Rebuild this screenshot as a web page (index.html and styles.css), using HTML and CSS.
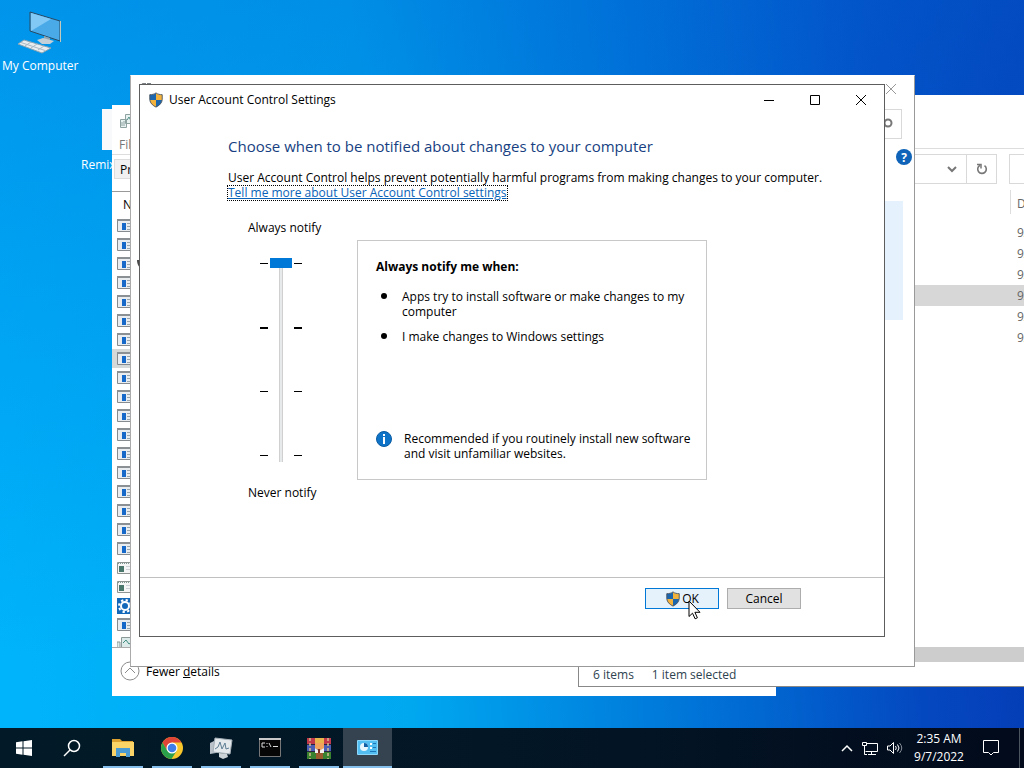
FILE: index.html
```html
<!DOCTYPE html>
<html lang="en">
<head>
  <meta charset="UTF-8">
  <meta name="viewport" content="width=device-width, initial-scale=1.0">
  <title>User Account Control Settings</title>
  <link rel="stylesheet" href="styles.css">
</head>
<body>
  <!-- Shared icons -->
  <svg class="sprite" aria-hidden="true">
    <symbol id="shield" viewBox="0 0 16 18">
      <path d="M8 1C6 2.600 3.500 3 1 3v5c0 4 3 7 7 9z" fill="#1c66ad"/>
      <path d="M8 1c2 1.600 4.500 2 7 2v5c0 4-3 7-7 9z" fill="#f3b23c"/>
      <path d="M1.200 9H8v8C4.500 15.500 1.600 13 1.200 9z" fill="#f3b23c"/>
      <path d="M8 9h6.800C14.400 13 11.500 15.500 8 17z" fill="#1c66ad"/>
      <path d="M8 1C6 2.600 3.500 3 1 3v5c0 4 3 7 7 9 4-2 7-5 7-9V3c-2.500 0-5-.4-7-2z" fill="none" stroke="#47515c"/>
    </symbol>
    <symbol id="app" viewBox="0 0 18 14">
      <path d="M.5 1.500h17v11H.5z" fill="#e9edef" stroke="#858b8f"/>
      <path d="M0 1h18" stroke="#8a9094" stroke-width="2"/>
      <path d="M5 4h4v7H5z" fill="#1669c9"/>
      <path d="M10 4.500h6M10 7.500h6M10 10.500h6" stroke="#9aa6ae"/>
    </symbol>
    <symbol id="bin" viewBox="0 0 18 14">
      <path d="M.5 1.500h17v11H.5z" fill="#f4f5f4" stroke="#8e9492"/>
      <path d="M1 2.500h16" stroke="#7f9a94" stroke-dasharray="1 1"/>
      <path d="M2 5h5v6H2z" fill="#49776c"/>
      <path d="M9 5.500h7M9 8.500h7" stroke="#ccd2d8"/>
    </symbol>
  </svg>

  <main class="desktop">
    <div class="shortcut computer">
      <svg width="44" height="44" viewBox="0 0 44 44">
        <path d="M12 1l30 9v20L12 20z" fill="#4aaae8" stroke="#294a63"/>
        <path d="M13 2l20 6-20 12z" fill="#82c9f5"/>
        <path d="M42.500 10v21" stroke="#c3c9bd"/>
        <path d="M26 25l6 2v3h-6z" fill="#93a7b3"/>
        <path d="M19 29l6-2 11 3-4 3-8 0z" fill="#c3d0d8"/>
        <path d="M0 33l6-4 27 8-9 5z" fill="#e9edef" stroke="#8aa4b4"/>
        <path d="M3 31.500l24 8M7 35l6-4M13 37l6-4M20 39l6-4" stroke="#a9b9c4"/>
      </svg>
      <span>My Computer</span>
    </div>
    <div class="shortcut remix">
      <span class="page"></span>
      <span>Remix</span>
    </div>

    <section class="window taskmgr">
      <div class="tm-title">
        <svg width="18" height="16" viewBox="0 0 18 16" fill="none" stroke="#8ea3a1">
          <path d="M.5 6.500h6v8h-6zM5.500 1.500h12v9h-12z" fill="#e8f2f1"/>
          <path d="M7 7l2-3 2 4 3-3" stroke="#4f8f87"/>
          <path d="M2 9v4M4 8v5"/>
        </svg>
      </div>
      <div class="tm-menu">File</div>
      <div class="tm-tabs"><button type="button">Processes</button></div>
      <div class="tm-head">Name</div>
      <ul class="tm-list" id="process-list"></ul>
      <div class="tm-foot">
        <svg width="20" height="20" viewBox="0 0 20 20" fill="none" stroke="#8b8b8b">
          <circle cx="10" cy="10" r="9"/>
          <path d="M5 12l5-5 5 5"/>
        </svg>
        <a href="#">Fewer <u>d</u>etails</a>
      </div>
    </section>

    <section class="window explorer">
      <div class="ex-title"></div>
      <div class="ex-bar">
        <div class="ex-path">
          <svg width="10" height="8" viewBox="0 0 10 8"><path d="M1 2l4 4 4-4" fill="none" stroke="#777" stroke-width="2"/></svg>
        </div>
        <button type="button" class="ex-refresh" aria-label="Refresh">
          <svg width="12" height="12" viewBox="0 0 12 12" fill="none" stroke="#777" stroke-width="1.600">
            <path d="M8.500 2.600A4.300 4.300 0 1 1 4 2.300"/>
            <path d="M1 1.500h4v4" stroke-width="1.500"/>
          </svg>
        </button>
        <input type="text" class="ex-search" aria-label="Search">
      </div>
      <table class="ex-files">
        <thead><tr><th>Date modified</th></tr></thead>
        <tbody>
          <tr><td>9/7/2022</td></tr>
          <tr><td>9/7/2022</td></tr>
          <tr><td>9/7/2022</td></tr>
          <tr class="selected"><td>9/7/2022</td></tr>
          <tr><td>9/7/2022</td></tr>
          <tr><td>9/7/2022</td></tr>
        </tbody>
      </table>
      <div class="ex-scroll"></div>
      <div class="ex-status"><span>6 items</span><span>1 item selected</span></div>
    </section>

    <section class="window security">
      <div class="sec-title">
        <svg width="16" height="16" viewBox="0 0 16 16" fill="none" stroke="#7a7f83" stroke-width="2"><path d="M1 8V4l3-3h3M8 1h4"/></svg>
        <svg width="12" height="12" viewBox="0 0 12 12"><path d="M1 1l10 10M11 1L1 11" stroke="#999"/></svg>
      </div>
      <div class="sec-search">
        <svg width="12" height="12" viewBox="0 0 12 12" fill="none" stroke="#777" stroke-width="2"><circle cx="7" cy="5" r="3.500"/><path d="M4 8l-3 3"/></svg>
      </div>
      <button type="button" class="help" aria-label="Help">?</button>
      <div class="sec-panel"></div>
      <svg class="mark" width="10" height="12" viewBox="0 0 10 12"><path d="M0 0h10v12C4 10 0 6 0 0z" fill="#4a4a4a"/></svg>
    </section>

    <section class="window uac">
      <header class="titlebar">
        <svg width="16" height="16"><use href="#shield"/></svg>
        <span class="caption">User Account Control Settings</span>
        <button type="button" aria-label="Minimize"><svg width="12" height="12" viewBox="0 0 12 12"><path d="M1 6.500h10" stroke="#000"/></svg></button>
        <button type="button" aria-label="Maximize"><svg width="12" height="12" viewBox="0 0 12 12"><path d="M1.500 1.500h9v9h-9z" fill="none" stroke="#000"/></svg></button>
        <button type="button" aria-label="Close"><svg width="12" height="12" viewBox="0 0 12 12"><path d="M1 1l10 10M11 1L1 11" stroke="#000"/></svg></button>
      </header>

      <div class="content">
        <h1>Choose when to be notified about changes to your computer</h1>
        <p>User Account Control helps prevent potentially harmful programs from making changes to your computer.</p>
        <a class="more" href="#">Tell me more about User Account Control settings</a>

        <div class="settings">
          <div class="level">
            <label for="level">Always notify</label>
            <div class="track">
              <div class="ticks"><i></i><i></i><i></i><i></i></div>
              <input type="range" id="level" min="0" max="3" value="3">
              <div class="ticks"><i></i><i></i><i></i><i></i></div>
            </div>
            <span>Never notify</span>
          </div>

          <div class="details">
            <h2>Always notify me when:</h2>
            <ul>
              <li>Apps try to install software or make changes to my computer</li>
              <li>I make changes to Windows settings</li>
            </ul>
            <div class="advice">
              <svg width="16" height="16" viewBox="0 0 16 16">
                <circle cx="8" cy="8" r="7.500" fill="#0f74c8" stroke="#0b5ca3"/>
                <path d="M7 3h2v2H7zM7 6h2v7H7z" fill="#fff"/>
              </svg>
              <p>Recommended if you routinely install new software and visit unfamiliar websites.</p>
            </div>
          </div>
        </div>
      </div>

      <footer class="actions">
        <button type="button" class="ok"><svg width="16" height="16"><use href="#shield"/></svg>OK</button>
        <button type="button">Cancel</button>
      </footer>
    </section>

    <svg class="cursor" width="14" height="20" viewBox="0 0 14 20">
      <path d="M1 1v15.500l3.500-3.300 2.600 5.600 2.300-1-2.500-5.500H12z" fill="#fff" stroke="#000"/>
    </svg>
  </main>

  <nav class="taskbar">
    <button type="button" class="task" aria-label="Start">
      <svg width="16" height="16" viewBox="0 0 16 16" fill="#fff"><path d="M0 2.300l6.500-1v6.200H0zM7.500 1.200L16 0v7.500H7.500zM0 8.500h6.500v6.200L0 13.700zM7.500 8.500H16V16l-8.500-1.200z"/></svg>
    </button>
    <button type="button" class="task" aria-label="Search">
      <svg width="18" height="18" viewBox="0 0 18 18" fill="none" stroke="#fff" stroke-width="1.500"><circle cx="11" cy="7" r="5.500"/><path d="M7 11l-6 6"/></svg>
    </button>
    <div class="running">
      <button type="button" class="task open" aria-label="File Explorer">
        <svg width="22" height="20" viewBox="0 0 22 20">
          <path d="M0 1h8l2 2h11v5H0z" fill="#dca12f"/>
          <path d="M0 4h22v14H0z" fill="#fbd468"/>
          <path d="M4 19v-9h14v9h-4v-4H8v4z" fill="#4a9bd4"/>
        </svg>
      </button>
      <button type="button" class="task open" aria-label="Chrome">
        <svg width="24" height="24" viewBox="0 0 24 24">
          <circle cx="12" cy="12" r="11" fill="#f9c62c"/>
          <path d="M2.500 6.500A11 11 0 0 1 21.500 6.500H12L7.200 14.800z" fill="#e04436"/>
          <path d="M2.500 6.500A11 11 0 0 0 11.500 23L16.700 14.700H7.300z" fill="#2ba04a"/>
          <circle cx="12" cy="12" r="5.500" fill="#fff"/>
          <circle cx="12" cy="12" r="4.300" fill="#3f7de8"/>
        </svg>
      </button>
      <button type="button" class="task open" aria-label="Task Manager">
        <svg width="24" height="22" viewBox="0 0 24 22">
          <path d="M1 6l6-3v13l-6 1z" fill="#b9c2c8"/>
          <path d="M6 1l17 2-2 14L4 15z" fill="#e4e9ec" stroke="#a5b0b7"/>
          <path d="M6 12l3-2 2-5 2 7 3-6 1 6 3-1" fill="none" stroke="#5d7e93"/>
          <path d="M10 16l8 1 1 3-5 2-4-2z" fill="#cdd4d8"/>
        </svg>
      </button>
      <button type="button" class="task open" aria-label="Command Prompt">
        <svg width="24" height="20" viewBox="0 0 24 20">
          <path d="M1.500.5h21v18h-21z" fill="#060606" stroke="#777"/>
          <path d="M1 1h22" stroke="#c9c9c9" stroke-width="2"/>
          <path d="M7 5H4v4h3M9 5v1M9 8v1M11 5l2 4M15 8.500h5" fill="none" stroke="#ddd"/>
        </svg>
      </button>
      <button type="button" class="task open" aria-label="WinRAR">
        <svg width="26" height="24" viewBox="0 0 26 24">
          <path d="M1 2h24v7H1z" fill="#c23a4a"/>
          <path d="M1 9h24v7H1z" fill="#4a5fb4"/>
          <path d="M1 16h24v7H1z" fill="#39822f"/>
          <path d="M1 8.500h24M1 15.500h24" stroke="#2b2440"/>
          <path d="M4 2v21M22 2v21" stroke="#d7bd8d" stroke-width="1.500" stroke-dasharray="3 2"/>
          <path d="M10 16h7v7h-7z" fill="#9c5b2c"/>
          <path d="M9 2h9v5H9z" fill="#e8b64a"/>
          <path d="M9 7h9v5l-4 3-5-3z" fill="#f0a45c"/>
          <path d="M9 12l4 3 5-3v5H9z" fill="#f4f1ec"/>
          <path d="M12 13h2v4h-2z" fill="#7d2c24"/>
        </svg>
      </button>
      <button type="button" class="task open active" aria-label="Control Panel">
        <svg width="22" height="18" viewBox="0 0 22 18">
          <path d="M.5 1.500h20v14H.5z" fill="#51bdf0" stroke="#8dd7fa"/>
          <circle cx="7" cy="8" r="4" fill="#e8f7ff"/>
          <path d="M7 8V4a4 4 0 0 1 4 4z" fill="#1460a5"/>
          <path d="M13 4h2v2h-2zM13 8h2v2h-2z" fill="#fff"/>
          <path d="M16 4.500h3M16 8.500h3M13 12.500h6" stroke="#1c75b8"/>
        </svg>
      </button>
    </div>

    <div class="tray">
      <svg width="12" height="8" viewBox="0 0 12 8"><path d="M1 7l5-5 5 5" fill="none" stroke="#fff" stroke-width="1.500"/></svg>
      <svg width="18" height="14" viewBox="0 0 18 14" fill="none" stroke="#fff">
        <path d="M5.500 2.500h11v8h-12M10.500 11v2M7 13.500h8M3.500 5v8.500H6M1.500 1.500h4v3h-4z"/>
      </svg>
      <svg width="16" height="14" viewBox="0 0 16 14" fill="none" stroke="#fff">
        <path d="M.5 5v4H3l3.500 3.500v-11L3 5zM8.500 5q1.500 2 0 4M10.500 3.500q3 3.500 0 7"/><path d="M12.500 2q4.500 5 0 10" stroke="#879099"/>
      </svg>
      <div class="clock"><span>2:35 AM</span><span>9/7/2022</span></div>
      <svg class="notes" width="18" height="18" viewBox="0 0 18 18"><path d="M1.500 1.500h15v12h-5L9 16l-2.500-2.500h-5z" fill="none" stroke="#fff"/></svg>
      <span class="peek"></span>
    </div>
  </nav>

  <script>
    // Icon shown in every row of the process list
    const rows = Array(18).fill('app').concat(['bin', 'bin', 'gear', 'app', 'chart']);
    const list = document.getElementById('process-list');
    const drawings = {
      app: '<use href="#app"/>',
      bin: '<use href="#bin"/>',
      gear: '<path d="M0 0h18v16H0z" fill="#1468ba"/><circle cx="8" cy="8" r="4" fill="none" stroke="#fff" stroke-width="2"/><circle cx="8" cy="8" r="6" fill="none" stroke="#fff" stroke-width="2" stroke-dasharray="2.300 2.400"/>',
      chart: '<path d="M0 6h3v9H0zM4.500 1.500h14v14h-14z" fill="#dcebea" stroke="#8b9a98"/><path d="M6 7l3-3 3 4 3-2" fill="none" stroke="#3f8c80"/>'
    };

    rows.forEach((name, index) => {
      const item = document.createElement('li');
      if (index === 7) item.className = 'selected';
      item.innerHTML = `<svg width="18" height="${name === 'gear' || name === 'chart' ? 16 : 14}">${drawings[name]}</svg>`;
      list.appendChild(item);
    });
  </script>
</body>
</html>
```
FILE: styles.css
```css
* {
  box-sizing: border-box;
}
body {
  margin: 0;
  height: 100vh;
  display: flex;
  flex-direction: column;
  overflow: hidden;
  font-family: "Open Sans", "Noto Sans", sans-serif;
  font-size: 12px;
  line-height: 15px;
  color: #000;
}
h1, h2, p, ul {
  margin: 0;
  padding: 0;
}
ul {
  list-style: none;
}
button {
  font: inherit;
  color: inherit;
  border: none;
  background: none;
  padding: 0;
}
svg {
  display: block;
  flex: none;
}
.sprite {
  position: absolute;
  width: 0;
  height: 0;
}

/* Desktop */
.desktop {
  position: relative;
  flex: 1;
  overflow: hidden;
  background:
    linear-gradient(rgba(0, 104, 215, 0.4), transparent 90%),
    linear-gradient(85deg, #00b4fb 0%, #00a8f0 38%, #0074d8 64%, #0448c0 85%, #0538b2 100%);
}
.shortcut {
  position: absolute;
  display: flex;
  flex-direction: column;
  align-items: center;
  color: #fff;
}
.computer {
  left: 2px;
  top: 11px;
  gap: 3px;
}
.remix {
  left: 81px;
  top: 109px;
  gap: 7px;
  align-items: flex-start;
}
.page {
  width: 30px;
  height: 41px;
  margin-left: 21px;
  background: #f7f9fa;
}
.window {
  position: absolute;
  background: #fff;
}

/* Task manager */
.taskmgr {
  left: 112px;
  top: 105px;
  width: 664px;
  height: 591px;
  display: flex;
  flex-direction: column;
}
.tm-title {
  padding: 8px 8px 6px;
}
.tm-menu {
  padding: 2px 7px 2px;
  color: #777;
}
.tm-tabs {
  display: flex;
  height: 38px;
  border-top: 1px solid #ddd;
  border-bottom: 1px solid #999;
  padding: 4px 2px 12px;
}
.tm-tabs button {
  padding: 0 5px;
  border: 1px solid #ddd;
  background: #f1f1f1;
}
.tm-head {
  padding: 5px 11px 4px;
}
.tm-list {
  flex: 1;
  overflow: hidden;
  border-bottom: 1px solid #aaa;
}
.tm-list li {
  display: flex;
  align-items: center;
  height: 19px;
  padding-left: 5px;
}
.tm-list .selected {
  background: #d5dad8;
}
.tm-foot {
  display: flex;
  align-items: center;
  gap: 6px;
  height: 48px;
  padding: 0 8px 2px;
}
.tm-foot a {
  color: #000;
  text-decoration: none;
}

/* File explorer */
.explorer {
  left: 578px;
  right: 0;
  top: 95px;
  height: 592px;
  display: flex;
  flex-direction: column;
  border-left: 1px solid #888;
  border-bottom: 1px solid #888;
  color: #666;
}
.ex-title {
  height: 54px;
  border-bottom: 1px solid #ddd;
}
.ex-bar {
  display: flex;
  padding-top: 5px;
  height: 41px;
}
.ex-bar > * {
  height: 30px;
  border: 1px solid #d9d9d9;
}
.ex-path {
  flex: 1;
  display: flex;
  align-items: center;
  justify-content: flex-end;
  padding-right: 9px;
}
.ex-bar .ex-refresh {
  display: grid;
  place-items: center;
  width: 30px;
  margin-right: 12px;
  border-left: none;
}
.ex-bar .ex-search {
  width: 15px;
  padding: 0;
  border-right: none;
}
.ex-files {
  width: 100%;
  border-collapse: collapse;
  table-layout: fixed;
}
.ex-files th,
.ex-files td {
  height: 21px;
  padding: 0 0 0 438px;
  text-align: left;
  font-weight: normal;
  white-space: nowrap;
  overflow: hidden;
}
.ex-files th {
  height: 32px;
  padding-bottom: 6px;
  background: linear-gradient(#ddd, #ddd) 431px 0 / 1px 24px no-repeat;
}
.ex-files .selected {
  background: #d7d7d7;
}
.ex-scroll {
  height: 15px;
  margin-top: auto;
  background: #cdcdcd;
}
.ex-status {
  display: flex;
  gap: 18px;
  padding: 5px 14px 4px;
  color: #2e4350;
}

/* Security window */
.security {
  left: 130px;
  top: 75px;
  width: 785px;
  height: 592px;
  display: flex;
  flex-direction: column;
  align-items: flex-end;
  border: 1px solid #999;
  border-top-color: #fff;
  border-left-color: #aaa;
}
.sec-title {
  display: flex;
  justify-content: space-between;
  width: 100%;
  padding: 7px 17px 0 8px;
}
.sec-search {
  width: 60px;
  height: 30px;
  margin: 10px 12px 0 0;
  padding: 8px;
  border: 1px solid #d9d9d9;
  display: flex;
  justify-content: flex-end;
}
.help {
  width: 16px;
  height: 16px;
  margin: 10px 2px 0 0;
  border-radius: 50%;
  background: #0f63b8;
  color: #fff;
  font-weight: bold;
}
.sec-panel {
  width: 60px;
  height: 119px;
  margin: 36px 11px 0 0;
  background: #e5f1fc;
}
.mark {
  position: absolute;
  left: 6px;
  top: 184px;
}

/* UAC dialog */
.uac {
  left: 139px;
  top: 84px;
  width: 746px;
  height: 553px;
  display: flex;
  flex-direction: column;
  border: 1px solid #5d5d5d;
}
.titlebar {
  display: flex;
  align-items: center;
  height: 29px;
  padding-left: 8px;
}
.titlebar button {
  display: grid;
  place-items: center;
  width: 46px;
  height: 28px;
}
.caption {
  flex: 1;
  padding-left: 5px;
}
.content {
  flex: 1;
  padding: 22px 88px 0;
}
.content h1 {
  margin-bottom: 14px;
  font-size: 15px;
  line-height: 20px;
  font-weight: normal;
  color: #173f82;
}
.content > p {
  white-space: nowrap;
}
.more {
  display: inline-block;
  color: #0a63b8;
  outline: 1px dotted #000;
  line-height: 14px;
}
.settings {
  display: flex;
  margin-top: 20px;
}
.level {
  width: 129px;
  padding-left: 20px;
}
.level label,
.level span {
  display: block;
}
.track {
  display: flex;
  gap: 2px;
  height: 250px;
  padding: 28px 0 0 12px;
}
.ticks {
  display: flex;
  flex-direction: column;
  justify-content: space-between;
  height: 193px;
}
.ticks i {
  width: 8px;
  height: 1px;
  background: #000;
}
.ticks i:nth-child(2) {
  height: 2px;
}
.track input {
  appearance: none;
  writing-mode: vertical-lr;
  direction: rtl;
  width: 22px;
  height: 204px;
  margin: -5px 0 0;
  background: linear-gradient(90deg, #d0d0d0 25%, #e7eaea 25% 75%, #d0d0d0 75%) center / 4px 100% no-repeat;
}
.track input::-webkit-slider-thumb {
  appearance: none;
  width: 22px;
  height: 10px;
  background: #0078d7;
}
.details {
  display: flex;
  flex-direction: column;
  width: 350px;
  height: 240px;
  margin-top: 20px;
  padding: 18px 8px 18px 18px;
  border: 1px solid #c8c8c8;
}
.details h2 {
  margin-bottom: 15px;
  font-size: 12px;
  line-height: 15px;
}
.details li {
  position: relative;
  margin-bottom: 10px;
  padding-left: 26px;
}
.details li::before {
  content: "";
  position: absolute;
  left: 5px;
  top: 4px;
  width: 6px;
  height: 6px;
  border-radius: 50%;
  background: #000;
}
.advice {
  display: flex;
  gap: 12px;
  margin-top: auto;
}
.actions {
  display: flex;
  justify-content: flex-end;
  gap: 8px;
  height: 59px;
  padding: 10px 83px 0 0;
  border-top: 1px solid #c0c0c0;
}
.actions button {
  display: flex;
  align-items: center;
  justify-content: center;
  width: 74px;
  height: 21px;
  border: 1px solid #adadad;
  background: #e1e1e1;
}
.actions .ok {
  gap: 1px;
  border-color: #0078d7;
  background: #e5f1fb;
}
.cursor {
  position: absolute;
  left: 688px;
  top: 600px;
}

/* Taskbar */
.taskbar {
  display: flex;
  height: 40px;
  background: linear-gradient(90deg, #021a27, #031525 60%, #020a1b);
  color: #fff;
}
.task {
  display: grid;
  place-items: center;
  width: 48px;
  height: 40px;
}
.running {
  display: flex;
  margin-left: 2px;
}
.task.open {
  width: 49px;
  background: linear-gradient(#86bfec, #86bfec) center bottom / 40px 2px no-repeat;
}
.task.active {
  background: linear-gradient(#86bfec, #86bfec) center bottom / 100% 2px no-repeat #34434f;
}
.tray {
  display: flex;
  align-items: center;
  gap: 8px;
  margin-left: auto;
}
.clock {
  display: flex;
  flex-direction: column;
  align-items: center;
  width: 52px;
  margin-left: 2px;
  line-height: 18px;
}
.notes {
  margin-left: 9px;
}
.peek {
  width: 5px;
  height: 40px;
  margin-left: 11px;
  border-left: 1px solid #4a5562;
}
```
